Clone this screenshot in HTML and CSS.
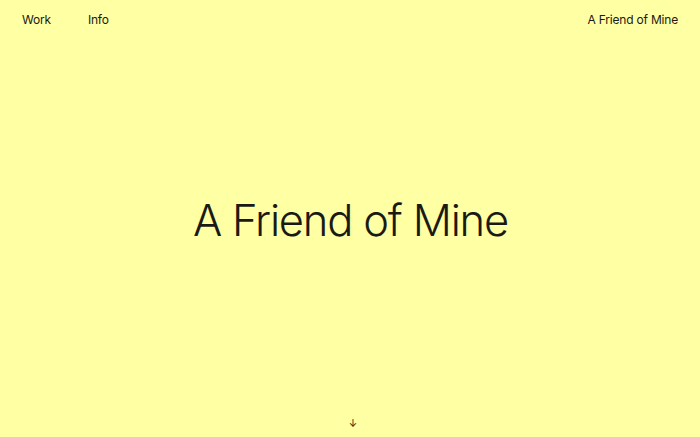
FILE: index.html
```html
<!DOCTYPE html>
<html lang="en">
<head>
<meta charset="utf-8">
<title>A Friend of Mine</title>
<link rel="stylesheet" href="styles.css">
</head>
<body>
<div class="page">
  <header class="nav">
    <div class="nav-left">
      <a class="nav-link" href="#">Work</a>
      <a class="nav-link" href="#">Info</a>
    </div>
    <a class="nav-link" href="#">A Friend of Mine</a>
  </header>
  <main class="hero">
    <h1 class="title">A Friend of Mine</h1>
  </main>
  <footer class="foot">
    <span class="arrow">↓</span>
  </footer>
</div>
</body>
</html>
```
FILE: styles.css
```css
html, body {
  margin: 0;
  padding: 0;
  height: 100%;
}
body {
  background: #ffffa3;
  color: #1a1a14;
  font-family: Inter, "Liberation Sans", sans-serif;
}
.page {
  height: 100vh;
  display: flex;
  flex-direction: column;
}
.nav {
  display: flex;
  justify-content: space-between;
  align-items: center;
  padding: 11px 22px 0 22px;
  height: 17px;
}
.nav-left {
  display: flex;
  gap: 37px;
}
.nav-link {
  color: inherit;
  text-decoration: none;
  font-size: 12px;
  font-weight: 400;
  letter-spacing: -0.2px;
}
.hero {
  flex: 1;
  display: flex;
  align-items: center;
  justify-content: center;
}
.title {
  margin: 0;
  font-size: 43.5px;
  font-weight: 300;
  letter-spacing: -1.2px;
  padding-bottom: 6px;
  padding-left: 1px;
}
.foot {
  display: flex;
  justify-content: center;
  padding-bottom: 8px;
  padding-left: 6px;
}
.arrow {
  font-size: 10px;
  line-height: 12px;
  color: #1a1a14;
}
```
